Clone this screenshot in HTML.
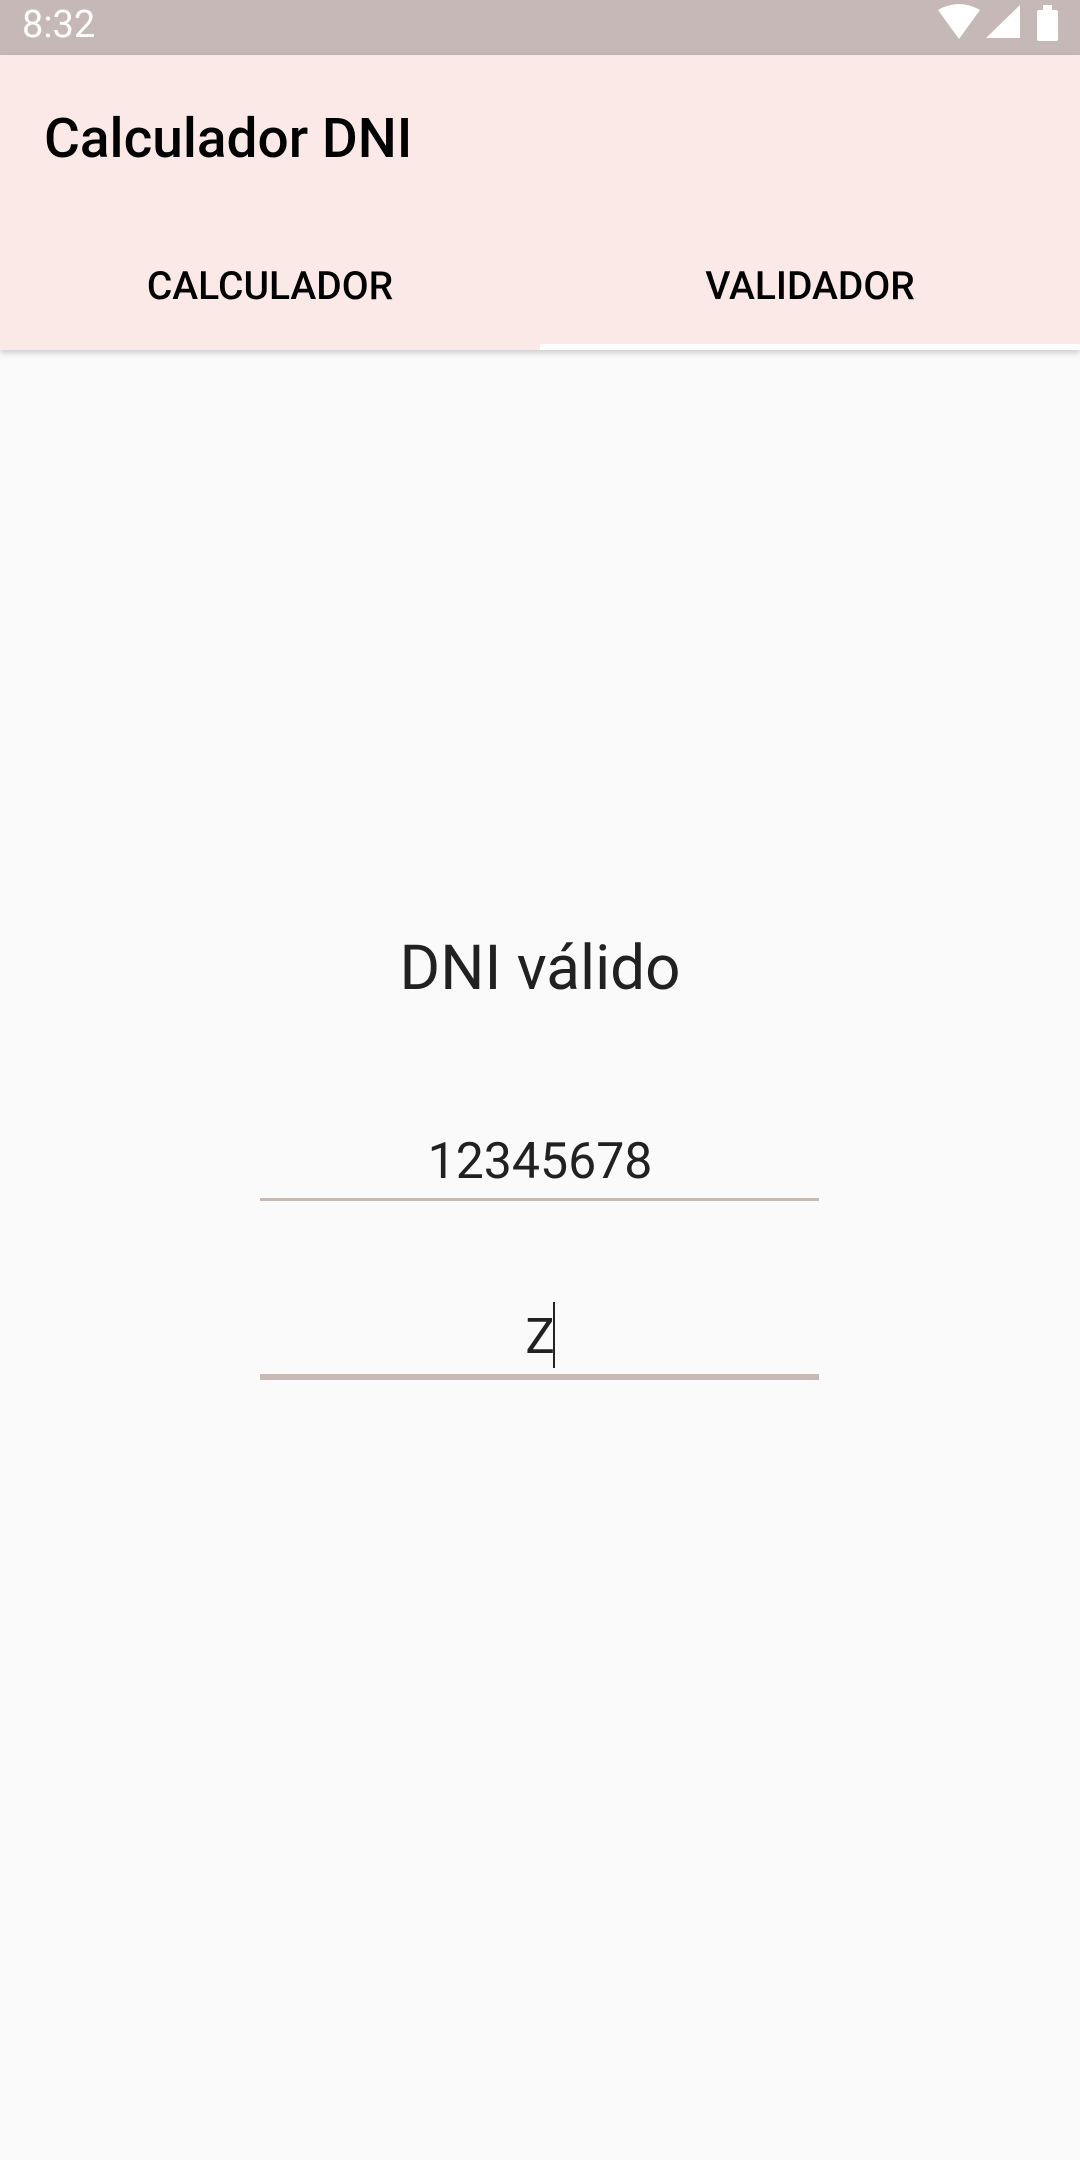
<!DOCTYPE html>
<html><head><meta charset="utf-8"><style>
body{margin:0;width:1080px;height:2160px;background:#fafafa;position:relative;overflow:hidden;font-family:"Roboto","Liberation Sans",sans-serif;}
.sb{position:absolute;left:0;top:0;width:1080px;height:55px;background:#c6b8b6;}
.time{position:absolute;left:22px;top:3px;color:#fff;font-size:38px;}
.ab{position:absolute;left:0;top:55px;width:1080px;height:295px;background:#fbe9e7;box-shadow:0 3px 6px rgba(0,0,0,0.18);}
.title{position:absolute;left:44px;top:107px;font-size:55px;font-weight:500;color:#000;}
.tab{position:absolute;top:263px;width:540px;text-align:center;font-size:39px;color:#000;font-weight:500;}
.ind{position:absolute;left:540px;top:344px;width:540px;height:6px;background:#fff;}
.c{position:absolute;left:0;width:1080px;text-align:center;color:#212121;}
.line{position:absolute;left:260px;width:559px;background:#c8b8b6;}
</style></head><body>
<div class="sb"><div class="time">8:32</div>
<svg style="position:absolute;left:936px;top:4px" width="130" height="40">
<path d="M2 6 Q23 -6 44 6 L23 35 Z" fill="#fff"/>
<path d="M50 34 L84 1 L84 34 Z" fill="#fff"/>
<rect x="101" y="6" width="21" height="31" rx="2" fill="#fff"/><rect x="107" y="1" width="9" height="6" fill="#fff"/>
</svg></div>
<div class="ab"></div>
<div class="title">Calculador DNI</div>
<div class="tab" style="left:0">CALCULADOR</div>
<div class="tab" style="left:540px">VALIDADOR</div>
<div class="ind"></div>
<div class="c" style="top:932px;font-size:62px;">DNI válido</div>
<div class="c" style="top:1133px;font-size:50px;">12345678</div>
<div class="line" style="top:1198px;height:3px"></div>
<div class="c" style="top:1308px;font-size:49px;">Z</div>
<div style="position:absolute;left:553px;top:1302px;width:2px;height:66px;background:#222"></div>
<div class="line" style="top:1374px;height:6px"></div>
</body></html>
